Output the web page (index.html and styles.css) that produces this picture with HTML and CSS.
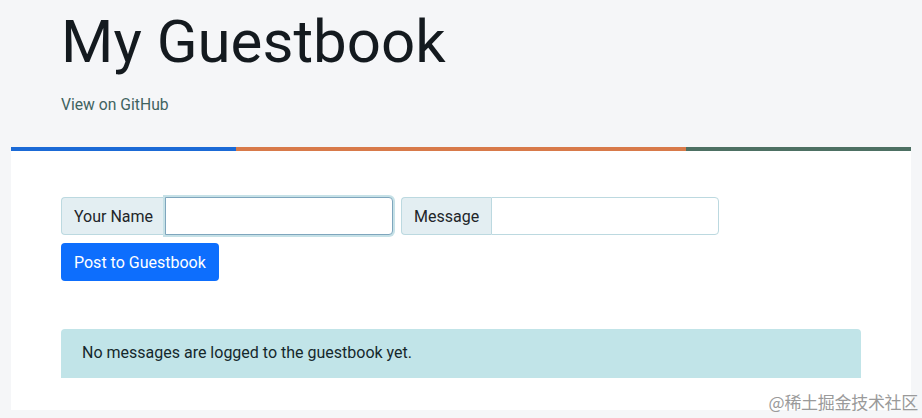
FILE: index.html
```html
<!DOCTYPE html>
<html lang="en">
<head>
<meta charset="utf-8">
<title>My Guestbook</title>
<link rel="stylesheet" href="styles.css">
</head>
<body>
<header class="hero">
  <h1 class="title">My Guestbook</h1>
  <a class="gh-link" href="#">View on GitHub</a>
</header>
<main class="card">
  <div class="stripe">
    <span class="s-blue"></span><span class="s-orange"></span><span class="s-green"></span>
  </div>
  <div class="card-body">
    <form class="form">
      <div class="groups">
        <div class="group">
          <span class="addon">Your Name</span>
          <input class="field focused" type="text">
        </div>
        <div class="group">
          <span class="addon">Message</span>
          <input class="field" type="text">
        </div>
      </div>
      <button class="btn" type="button">Post to Guestbook</button>
    </form>
    <div class="alert">No messages are logged to the guestbook yet.</div>
  </div>
</main>
<div class="watermark">@稀土掘金技术社区</div>
</body>
</html>
```
FILE: styles.css
```css
* { box-sizing: border-box; }
html, body { margin: 0; padding: 0; }
body {
  background: #f5f6f8;
  font-family: Roboto, "Noto Sans", sans-serif;
  color: #212529;
  width: 922px;
  height: 418px;
  overflow: hidden;
  position: relative;
}
.hero {
  padding: 6px 0 0 61px;
  height: 147px;
}
.title {
  margin: 0;
  font-size: 60px;
  font-weight: 400;
  line-height: 72px;
  color: #141a1f;
}
.gh-link {
  display: inline-block;
  margin-top: 17px;
  font-size: 15.7px;
  color: #3f6360;
  text-decoration: none;
}
.card {
  margin-left: 11px;
  width: 900px;
  height: 263px;
  background: #fff;
}
.stripe { display: flex; height: 4px; }
.s-blue { width: 225px; background: #1b6ad6; }
.s-orange { width: 450px; background: #d87a4a; }
.s-green { flex: 1; background: #4d7063; }
.card-body { padding: 46px 50px 0 50px; }
.groups { display: flex; gap: 8px; }
.group {
  display: flex;
  height: 38px;
}
.addon {
  display: flex;
  align-items: center;
  padding: 0 12px;
  font-size: 16px;
  color: #212529;
  background: #e3eef2;
  border: 1px solid #bcd9e0;
  border-right: none;
  border-radius: 4px 0 0 4px;
}
.field {
  width: 228px;
  height: 38px;
  border: 1px solid #bcd9e0;
  border-radius: 0 4px 4px 0;
  background: #fff;
  font: inherit;
  padding: 0 12px;
  outline: none;
}
.focused {
  border-color: #7fa6bd;
  box-shadow: 0 0 0 2px #c6e1e7;
  position: relative;
}
.btn {
  display: block;
  margin-top: 8px;
  height: 38px;
  padding: 0 13px;
  background: #0d6efd;
  color: #fff;
  border: none;
  border-radius: 4px;
  font-family: inherit;
  font-size: 16px;
}
.alert {
  margin-top: 48px;
  padding: 12px 21px;
  height: 49px;
  background: #c1e4e8;
  border-radius: 4px 4px 0 0;
  font-size: 16px;
  line-height: 24px;
  color: #15282c;
}
.watermark {
  position: absolute;
  right: 4px;
  bottom: 4px;
  font-family: "Noto Sans CJK SC", sans-serif;
  font-size: 17px;
  color: #9a9a9a;
  letter-spacing: -0.3px;
}
```
